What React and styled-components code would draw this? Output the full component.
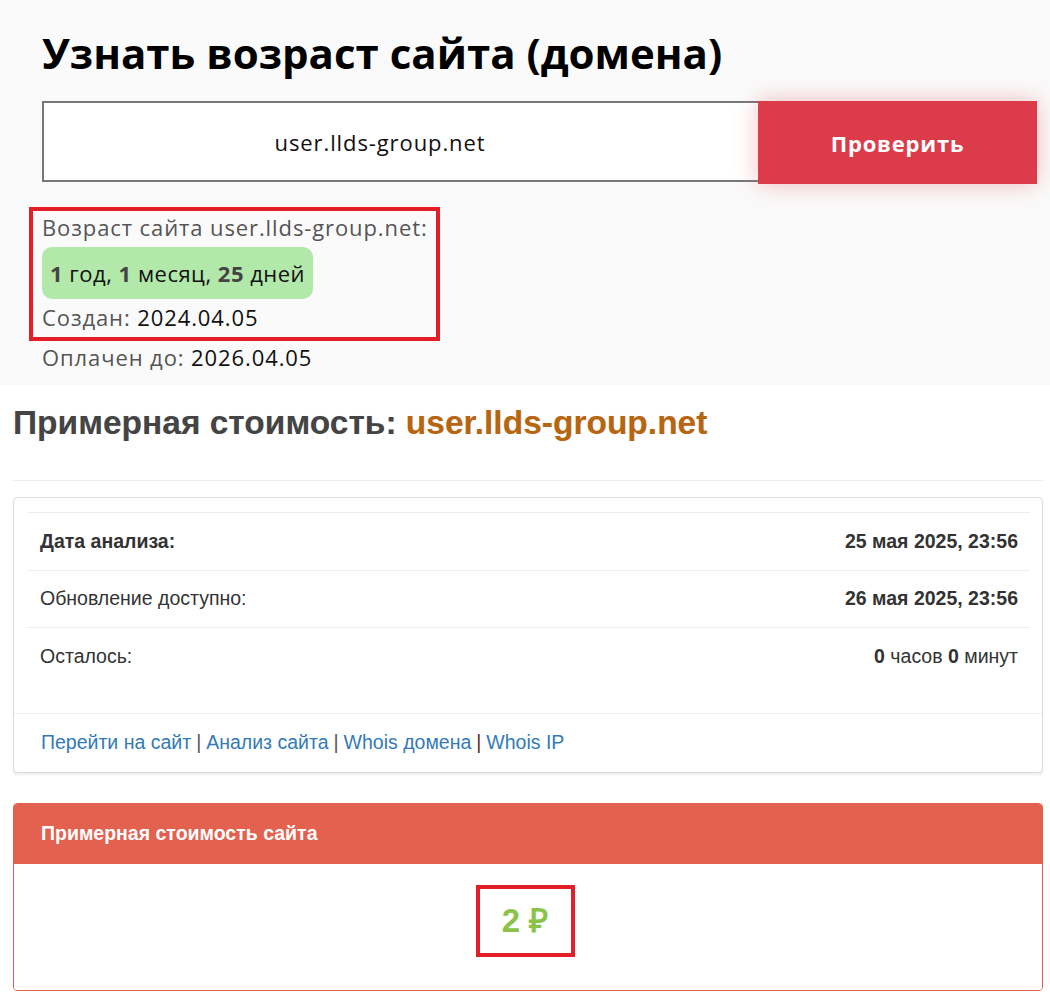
import React from 'react';
import styled, { createGlobalStyle } from 'styled-components';

const GlobalStyle = createGlobalStyle`
  html, body {
    margin: 0;
    padding: 0;
    background: #fff;
  }
  * {
    box-sizing: border-box;
  }
`;

const Page = styled.div`
  width: 1050px;
`;

/* верхний блок: возраст домена */
const AgeSection = styled.section`
  height: 385px;
  background: #fafafa;
  padding: 25px 0 0 42px;
  font-family: 'Open Sans', 'Noto Sans', sans-serif;
`;

const Title = styled.h1`
  margin: 0 0 20px;
  font-size: 42px;
  line-height: 56px;
  font-weight: 700;
  color: #000;
`;

const SearchRow = styled.div`
  display: flex;
  align-items: flex-start;
  margin-bottom: 23px;
`;

const DomainInput = styled.div`
  width: 718px;
  height: 81px;
  padding-right: 42px;
  border: 2px solid #777;
  background: #fff;
  display: flex;
  align-items: center;
  justify-content: center;
  font-size: 22px;
  letter-spacing: 0.9px;
  color: #111;
`;

const CheckButton = styled.button`
  width: 279px;
  height: 83px;
  margin-left: -2px;
  border: 0;
  background: #dc3c4a;
  color: #fff;
  font-family: inherit;
  font-size: 22px;
  letter-spacing: 0.8px;
  font-weight: 700;
  box-shadow: 0 0 22px rgba(230, 70, 80, 0.35);
  cursor: pointer;
`;

const Highlight = styled.div`
  display: inline-block;
  margin-left: -13px;
  border: 4px solid #e41e26;
  padding: 0 8px 4px 9px;
`;

const InfoLine = styled.div`
  font-size: 22px;
  letter-spacing: 0.9px;
  line-height: 32px;
  color: #555;
  white-space: nowrap;
`;

const Value = styled.span`
  color: #111;
`;

const AgePill = styled.div`
  display: inline-block;
  margin: 4px 0 2px;
  padding: 10px 8px;
  border-radius: 10px;
  background: #b3e8ab;
  font-size: 22px;
  letter-spacing: 0.5px;
  line-height: 32px;
  font-weight: 500;
  color: #111;
`;

const Num = styled.b`
  color: #444;
`;

/* нижний блок: стоимость */
const CostSection = styled.section`
  padding: 19px 7px 6px 13px;
  font-family: 'Liberation Sans', Arial, sans-serif;
  color: #333;
`;

const CostTitle = styled.h2`
  margin: 0;
  font-size: 33.5px;
  line-height: 38px;
  font-weight: 700;
  color: #444;
  text-shadow: 0 0 1px rgba(0, 0, 0, 0.15);
`;

const Domain = styled.span`
  color: #b8650f;
`;

const Rule = styled.hr`
  margin: 38px 0 16px;
  border: 0;
  border-top: 1px solid #eee;
`;

const Card = styled.div`
  border: 1px solid #ddd;
  border-radius: 4px;
  background: #fff;
  box-shadow: 0 2px 2px rgba(0, 0, 0, 0.08);
`;

const CardBody = styled.div`
  padding: 14px 12px 28px 13px;
`;

const Row = styled.div`
  display: flex;
  justify-content: space-between;
  align-items: center;
  height: 57.5px;
  padding: 0 12px 0 13px;
  border-top: 1px solid #eee;
  font-size: 19.5px;
  font-weight: ${p => (p.$bold ? 700 : 400)};
`;

const RowValue = styled.span`
  font-weight: ${p => (p.$bold ? 700 : 400)};
`;

const CardFooter = styled.div`
  height: 59px;
  display: flex;
  align-items: center;
  padding: 0 27px;
  border-top: 1px solid #eee;
  font-size: 19.5px;
  color: #555;
`;

const Link = styled.a`
  color: #337ab7;
  text-decoration: none;
`;

const Sep = styled.span`
  margin: 0 5px;
  color: ${p => (p.$dark ? '#5a2a20' : '#555')};
`;

const Panel = styled.div`
  margin-top: 30px;
  border: 1px solid #e06150;
  border-radius: 4px;
  overflow: hidden;
`;

const PanelHeading = styled.div`
  height: 60px;
  display: flex;
  align-items: center;
  padding-left: 27px;
  background: #e2614f;
  color: #fff;
  font-size: 19.5px;
  font-weight: 700;
`;

const PanelBody = styled.div`
  height: 126px;
  padding-top: 21px;
  text-align: center;
  background: #fff;
`;

const PriceBox = styled.div`
  display: inline-block;
  width: 99px;
  height: 72px;
  margin-right: 6px;
  border: 4px solid #e41e26;
  font-size: 33px;
  font-weight: 700;
  line-height: 64px;
  color: #8bc34a;
`;

const App = () => {
  return (
    <Page>
      <GlobalStyle />
      <AgeSection>
        <Title>Узнать возраст сайта (домена)</Title>
        <SearchRow>
          <DomainInput>user.llds-group.net</DomainInput>
          <CheckButton>Проверить</CheckButton>
        </SearchRow>
        <Highlight>
          <InfoLine>Возраст сайта user.llds-group.net:</InfoLine>
          <AgePill>
            <Num>1</Num> год, <Num>1</Num> месяц, <Num>25</Num> дней
          </AgePill>
          <InfoLine>
            Создан: <Value>2024.04.05</Value>
          </InfoLine>
        </Highlight>
        <InfoLine>
          Оплачен до: <Value>2026.04.05</Value>
        </InfoLine>
      </AgeSection>

      <CostSection>
        <CostTitle>
          Примерная стоимость: <Domain>user.llds-group.net</Domain>
        </CostTitle>
        <Rule />
        <Card>
          <CardBody>
            <Row $bold>
              <span>Дата анализа:</span>
              <RowValue $bold>25 мая 2025, 23:56</RowValue>
            </Row>
            <Row>
              <span>Обновление доступно:</span>
              <RowValue $bold>26 мая 2025, 23:56</RowValue>
            </Row>
            <Row>
              <span>Осталось:</span>
              <RowValue>
                <b>0</b> часов <b>0</b> минут
              </RowValue>
            </Row>
          </CardBody>
          <CardFooter>
            <Link href="#">Перейти на сайт</Link>
            <Sep>|</Sep>
            <Link href="#">Анализ сайта</Link>
            <Sep>|</Sep>
            <Link href="#">Whois домена</Link>
            <Sep $dark>|</Sep>
            <Link href="#">Whois IP</Link>
          </CardFooter>
        </Card>
        <Panel>
          <PanelHeading>Примерная стоимость сайта</PanelHeading>
          <PanelBody>
            <PriceBox>2 ₽</PriceBox>
          </PanelBody>
        </Panel>
      </CostSection>
    </Page>
  );
};

export default App;
